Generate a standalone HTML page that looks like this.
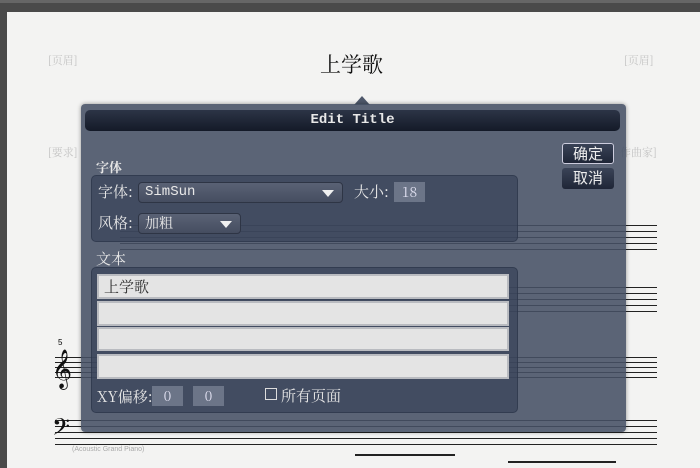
<!DOCTYPE html>
<html><head><meta charset="utf-8"><style>
*{margin:0;padding:0;box-sizing:border-box}
body{width:700px;height:468px;overflow:hidden;background:#4a4a4a;position:relative;font-family:"Liberation Sans","Noto Serif CJK SC","Noto Sans CJK SC",sans-serif}
.abs{position:absolute}
.page{left:7px;top:12px;width:693px;height:456px;background:#f3f3f2}
.hdr{color:#c4c4c4;font-size:11px;font-family:"Noto Serif CJK SC",serif}
.line{position:absolute;height:1px;background:#222}
.dlg{left:81px;top:104px;width:545px;height:328px;background:rgba(70,80,100,0.88);border-radius:4px;box-shadow:0 0 4px rgba(0,0,0,.4)}
.tb{left:85px;top:110px;width:535px;height:21px;border-radius:5px;background:linear-gradient(#2c3446,#141a28);color:#e8e8e8;font-family:"Liberation Mono",monospace;font-size:14px;font-weight:bold;text-align:center;line-height:21px}
.lbl{color:#e6e6e6;font-size:15px;font-family:"Noto Serif CJK SC",serif}
.grp{border-radius:5px;background:rgba(55,66,88,0.7);border:1px solid rgba(40,50,70,.6)}
.sel{border-radius:4px;background:linear-gradient(#5a6275,#454d60);border:1px solid #2e3545;color:#e8e8e8;font-size:14px;padding-left:6px;line-height:19px;font-family:"Noto Serif CJK SC",serif}
.arr{position:absolute;right:8px;top:7px;width:0;height:0;border-left:6px solid transparent;border-right:6px solid transparent;border-top:7px solid #f0f0f0}
.num{background:#6c7588;color:#dde;text-align:center;font-size:14px;line-height:20px;font-family:"Noto Serif CJK SC",serif}
.inp{left:97px;width:412px;background:#e4e4e4;border:2px solid #b9bbc0;font-size:15px;color:#333;padding-left:5px;font-family:"Noto Serif CJK SC",serif}
.btn{left:562px;width:52px;height:21px;border-radius:3px;background:linear-gradient(#3a4357,#1f2637);color:#eee;font-size:15px;text-align:center;line-height:20px;font-family:"Noto Sans CJK SC",sans-serif}
</style></head><body>
<div class="abs" style="left:0;top:0;width:700px;height:3px;background:#666"></div>
<div class="abs page"></div>
<div class="abs hdr" style="left:48px;top:52px">[页眉]</div>
<div class="abs hdr" style="left:624px;top:52px">[页眉]</div>
<div class="abs hdr" style="left:48px;top:144px">[要求]</div>
<div class="abs hdr" style="left:620px;top:144px">作曲家]</div>
<div class="abs" style="left:320px;top:49px;font-size:21px;color:#111;font-family:'Noto Serif CJK SC',serif">上学歌</div>
<div class="line" style="left:120px;top:225px;width:537px"></div>
<div class="line" style="left:120px;top:231px;width:537px"></div>
<div class="line" style="left:120px;top:237px;width:537px"></div>
<div class="line" style="left:120px;top:243px;width:537px"></div>
<div class="line" style="left:120px;top:249px;width:537px"></div>
<div class="line" style="left:120px;top:287px;width:537px"></div>
<div class="line" style="left:120px;top:293px;width:537px"></div>
<div class="line" style="left:120px;top:299px;width:537px"></div>
<div class="line" style="left:120px;top:305px;width:537px"></div>
<div class="line" style="left:120px;top:311px;width:537px"></div>
<div class="line" style="left:55px;top:357px;width:602px"></div>
<div class="line" style="left:55px;top:362px;width:602px"></div>
<div class="line" style="left:55px;top:367px;width:602px"></div>
<div class="line" style="left:55px;top:372px;width:602px"></div>
<div class="line" style="left:55px;top:377px;width:602px"></div>
<div class="line" style="left:55px;top:420px;width:602px"></div>
<div class="line" style="left:55px;top:426px;width:602px"></div>
<div class="line" style="left:55px;top:432px;width:602px"></div>
<div class="line" style="left:55px;top:438px;width:602px"></div>
<div class="line" style="left:55px;top:444px;width:602px"></div>
<div class="abs" style="left:52px;top:350px;font-size:34px;color:#111">𝄞</div>
<div class="abs" style="left:52px;top:414px;font-size:28px;color:#111">𝄢</div>
<div class="abs" style="left:58px;top:338px;font-size:8px">5</div>
<div class="abs" style="left:72px;top:446px;font-size:7px;color:#aaa">(Acoustic Grand Piano)</div>
<div class="line" style="left:355px;top:454px;width:100px;height:2px"></div>
<div class="line" style="left:508px;top:461px;width:108px;height:2px"></div>
<div class="abs" style="left:354px;top:96px;width:0;height:0;border-left:8px solid transparent;border-right:8px solid transparent;border-bottom:9px solid #4e586b"></div>
<div class="abs dlg"></div>
<div class="abs tb">Edit Title</div>
<div class="abs btn" style="top:143px;border:1px solid #ccd">确定</div>
<div class="abs btn" style="top:168px">取消</div>
<div class="abs lbl" style="left:96px;top:157px;font-weight:bold;font-size:13px">字体</div>
<div class="abs grp" style="left:91px;top:175px;width:427px;height:67px"></div>
<div class="abs lbl" style="left:98px;top:181px">字体:</div>
<div class="abs sel" style="left:138px;top:182px;width:205px;height:21px;font-family:'Liberation Mono','Noto Serif CJK SC',monospace">SimSun<span class="arr"></span></div>
<div class="abs lbl" style="left:354px;top:181px">大小:</div>
<div class="abs num" style="left:394px;top:182px;width:31px">18</div>
<div class="abs lbl" style="left:98px;top:212px">风格:</div>
<div class="abs sel" style="left:138px;top:213px;width:103px;height:21px">加粗<span class="arr"></span></div>
<div class="abs lbl" style="left:96px;top:248px">文本</div>
<div class="abs grp" style="left:91px;top:267px;width:427px;height:146px"></div>
<div class="abs inp" style="top:274px;height:25px;line-height:21px">上学歌</div>
<div class="abs inp" style="top:301px;height:25px"></div>
<div class="abs inp" style="top:327px;height:24px"></div>
<div class="abs inp" style="top:354px;height:25px"></div>
<div class="abs lbl" style="left:97px;top:386px">XY偏移:</div>
<div class="abs num" style="left:152px;top:386px;width:31px">0</div>
<div class="abs num" style="left:193px;top:386px;width:31px">0</div>
<div class="abs" style="left:265px;top:388px;width:12px;height:12px;border:1.5px solid #ddd"></div>
<div class="abs lbl" style="left:281px;top:385px">所有页面</div>
</body></html>
